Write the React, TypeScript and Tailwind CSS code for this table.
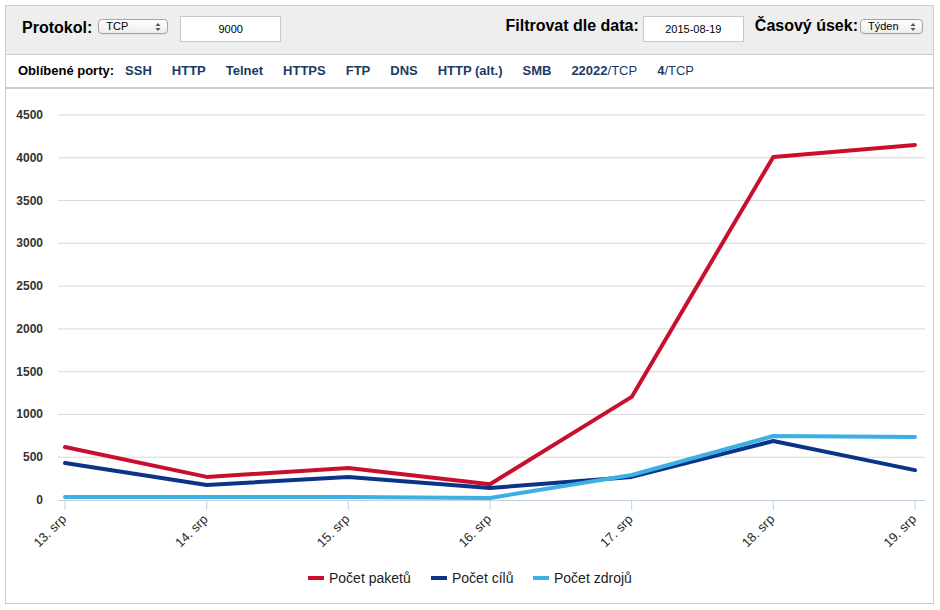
import React from "react";

const font = { fontFamily: '"Liberation Sans", Arial, Helvetica, sans-serif' };

function FakeSelect({ label, w }: { label: string; w: string }) {
  return (
    <div
      className={`${w} h-[15px] flex items-center justify-between rounded-[4px] border border-[#a4a4a4] bg-gradient-to-b from-white to-[#ededed] pl-[7px] pr-[6px] text-[11px] leading-none text-black shadow-[0_1px_0_rgba(0,0,0,0.05)]`}
    >
      <span>{label}</span>
      <svg width="6" height="10" viewBox="0 0 6 10">
        <path d="M0.5 4 L3 1 L5.5 4 Z" fill="#555" />
        <path d="M0.5 6 L3 9 L5.5 6 Z" fill="#555" />
      </svg>
    </div>
  );
}

function FakeInput({ value }: { value: string }) {
  return (
    <div className="w-[101px] h-[26px] border border-[#c8c8c8] bg-white flex items-center justify-center text-[11px] text-black">
      {value}
    </div>
  );
}

const xs = [65, 206.7, 348.3, 490, 631.7, 773.3, 915];
const yv = (v: number) => 500 - (v * 385) / 4500;
const red = [620, 270, 375, 185, 1205, 4010, 4150];
const dark = [432, 175, 270, 140, 270, 690, 350];
const light = [35, 35, 35, 23, 292, 748, 736];
const labels = ["13. srp", "14. srp", "15. srp", "16. srp", "17. srp", "18. srp", "19. srp"];
const ticks = [4500, 4000, 3500, 3000, 2500, 2000, 1500, 1000, 500, 0];

const pts = (arr: number[]) => arr.map((v, i) => `${xs[i]},${yv(v).toFixed(1)}`).join(" ");

function Chart() {
  return (
    <svg width="927" height="514" viewBox="6 89 927 514" className="block" style={font}>
      {ticks.map((t) => (
        <g key={t}>
          {t !== 0 && (
            <line x1={58} x2={925} y1={yv(t)} y2={yv(t)} stroke="#d8d8d8" strokeWidth={1} />
          )}
          <text x={43} y={yv(t) + 4} textAnchor="end" fontSize={12} fontWeight="bold" fill="#333">
            {t}
          </text>
        </g>
      ))}
      <line x1={58} x2={925} y1={500.5} y2={500.5} stroke="#c0d0e0" strokeWidth={1} />
      {xs.map((x, i) => (
        <g key={i}>
          <line x1={x} x2={x} y1={500} y2={510} stroke="#c0d0e0" strokeWidth={1} />
          <text
            x={x + 2}
            y={520}
            textAnchor="end"
            fontSize={13}
            fill="#2a2a2a"
            transform={`rotate(-45 ${x + 2} 520)`}
          >
            {labels[i]}
          </text>
        </g>
      ))}
      <polyline points={pts(red)} fill="none" stroke="#c8102e" strokeWidth={4} strokeLinejoin="round" strokeLinecap="round" />
      <polyline points={pts(dark)} fill="none" stroke="#0b3489" strokeWidth={4} strokeLinejoin="round" strokeLinecap="round" />
      <polyline points={pts(light)} fill="none" stroke="#3cb0e2" strokeWidth={4} strokeLinejoin="round" strokeLinecap="round" />
      {[
        { x: 308, c: "#c8102e", t: "Počet paketů" },
        { x: 431, c: "#0b3489", t: "Počet cílů" },
        { x: 533, c: "#3cb0e2", t: "Počet zdrojů" },
      ].map((l) => (
        <g key={l.t}>
          <line x1={l.x} x2={l.x + 16} y1={578} y2={578} stroke={l.c} strokeWidth={4} />
          <text x={l.x + 21} y={583} fontSize={14} fill="#222">
            {l.t}
          </text>
        </g>
      ))}
    </svg>
  );
}

export default function App() {
  const links = ["SSH", "HTTP", "Telnet", "HTTPS", "FTP", "DNS", "HTTP (alt.)", "SMB"];
  return (
    <div className="w-[940px] h-[610px] bg-white pt-[5px] pl-[5px]" style={font}>
      <div className="w-[929px] border border-[#cccccc]">
        <div className="h-[49px] bg-[#eeeeee] border-b border-[#cccccc] flex items-start justify-between pt-[7px] pl-[16px] pr-[10px]">
          <div className="flex items-start">
            <span className="mt-[6px] text-[16px] leading-[18px] font-bold text-black">Protokol:</span>
            <div className="ml-[6px] mt-[6px]">
              <FakeSelect label="TCP" w="w-[70px]" />
            </div>
            <div className="ml-[12px] mt-[3px]">
              <FakeInput value="9000" />
            </div>
          </div>
          <div className="flex items-start">
            <span className="mt-[4px] text-[16px] leading-[18px] font-bold text-black">Filtrovat dle data:</span>
            <div className="ml-[4px] mt-[3px]">
              <FakeInput value="2015-08-19" />
            </div>
            <span className="mt-[4px] ml-[11px] text-[16px] leading-[18px] font-bold text-black">Časový úsek:</span>
            <div className="ml-[2px] mt-[6px]">
              <FakeSelect label="Týden" w="w-[63px]" />
            </div>
          </div>
        </div>
        <div className="h-[34px] border-b-2 border-[#cccccc] flex items-center pl-[12px] text-[13px] font-bold">
          <span className="text-black mr-[11px]">Oblíbené porty:</span>
          <div className="flex items-center gap-x-[20px] text-[#1b3a66]">
            {links.map((l) => (
              <span key={l}>{l}</span>
            ))}
            <span>
              22022<span className="font-normal">/TCP</span>
            </span>
            <span>
              4<span className="font-normal">/TCP</span>
            </span>
          </div>
        </div>
        <Chart />
      </div>
    </div>
  );
}
